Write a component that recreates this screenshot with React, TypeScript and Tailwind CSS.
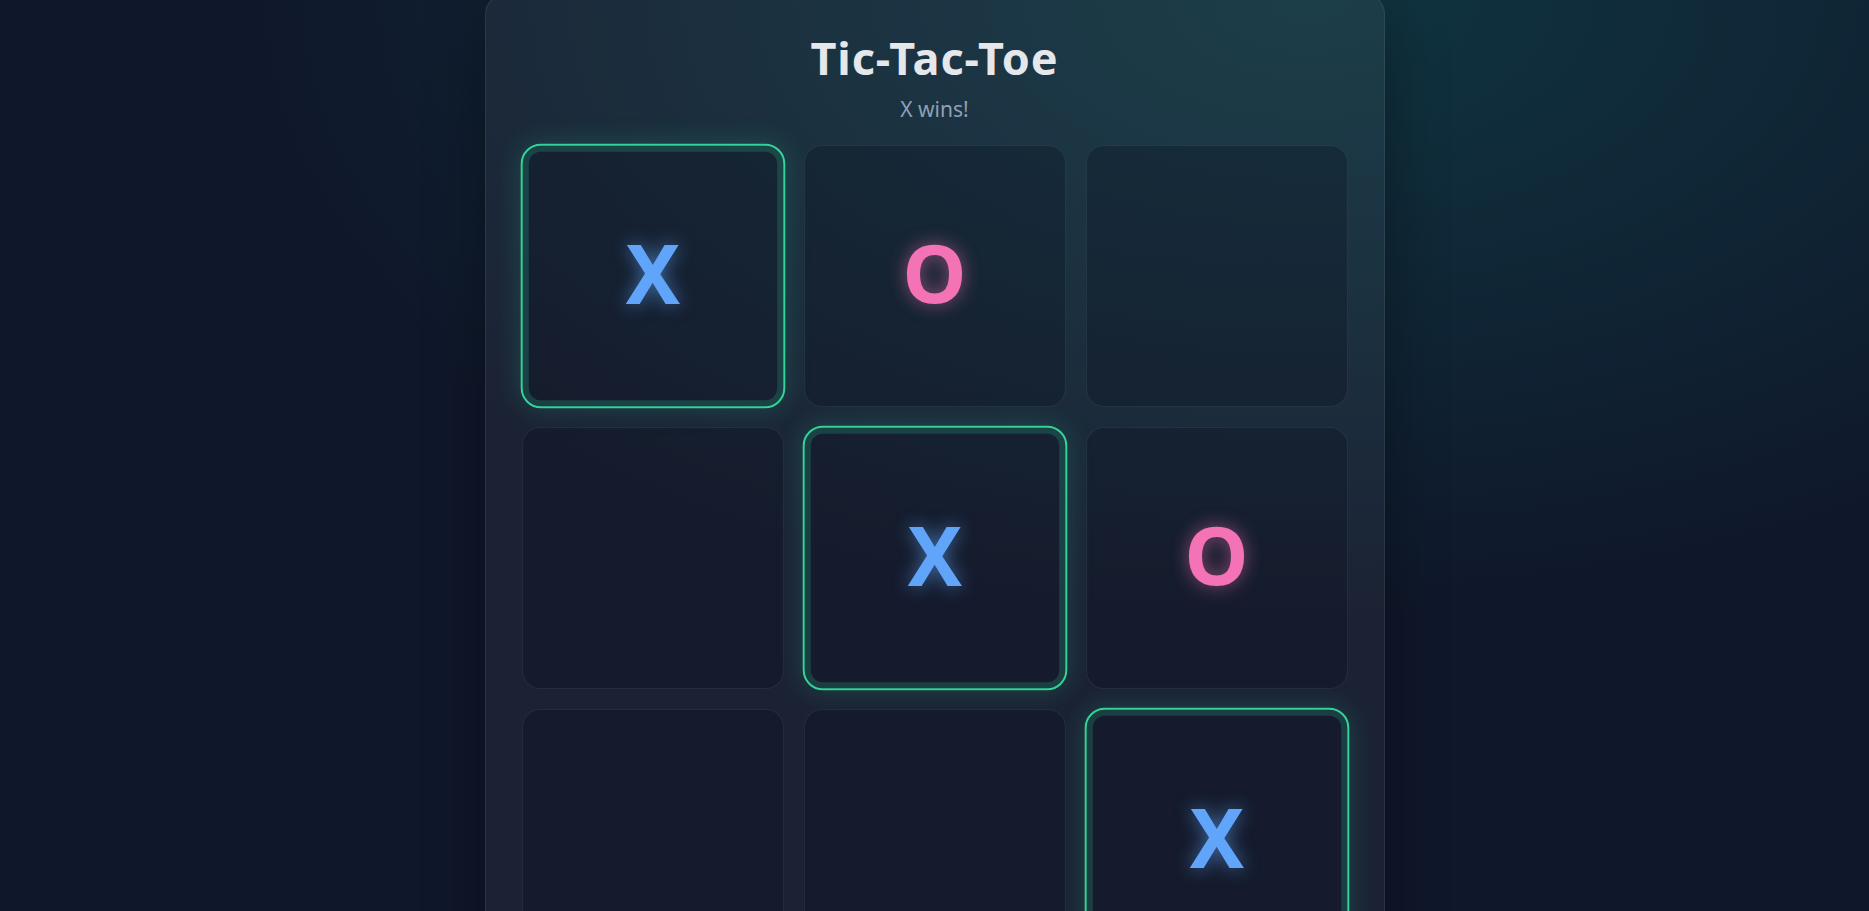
import { useState } from 'react'

type Mark = 'X' | 'O' | null

const lines = [
  [0, 1, 2], [3, 4, 5], [6, 7, 8],
  [0, 3, 6], [1, 4, 7], [2, 5, 8],
  [0, 4, 8], [2, 4, 6],
]

const findWinner = (board: Mark[]) => {
  for (const [a, b, c] of lines) {
    if (board[a] && board[a] === board[b] && board[a] === board[c]) {
      return { player: board[a], line: [a, b, c] }
    }
  }
  return null
}

const Cell = ({ value, highlight, onClick }: { value: Mark; highlight: boolean; onClick: () => void }) => (
  <button
    onClick={onClick}
    className={
      highlight
        ? 'aspect-square scale-[1.01] rounded-[20px] border-2 border-[#34d399] bg-[#020617]/25 shadow-[inset_0_0_0_6px_rgba(52,211,153,0.2),0_0_26px_rgba(52,211,153,0.2)] flex items-center justify-center'
        : 'aspect-square rounded-[18px] border border-white/[0.07] bg-[#020617]/25 flex items-center justify-center'
    }
  >
    {value === 'X' && (
      <span className="mb-2 text-[81px] leading-none font-bold text-[#60a5fa] [text-shadow:0_0_18px_rgba(96,165,250,0.6)]">X</span>
    )}
    {value === 'O' && (
      <span className="mb-2 text-[81px] leading-none font-bold text-[#f472b6] [text-shadow:0_0_18px_rgba(244,114,182,0.55)]">O</span>
    )}
  </button>
)

export default function App() {
  const [board, setBoard] = useState<Mark[]>(['X', 'O', null, null, 'X', 'O', null, null, 'X'])
  const winner = findWinner(board)

  const play = (i: number) => {
    if (board[i] || winner) return
    const xs = board.filter((m) => m === 'X').length
    const os = board.filter((m) => m === 'O').length
    const next = [...board]
    next[i] = xs > os ? 'O' : 'X'
    setBoard(next)
  }

  return (
    <div
      className="h-screen overflow-hidden bg-[#0f172a] bg-[radial-gradient(ellipse_1100px_620px_at_70%_0%,rgba(20,184,166,0.18),transparent)] flex justify-center"
      style={{ fontFamily: '"Noto Sans", "Open Sans", sans-serif' }}
    >
      <div className="w-[900px] -mt-[6px] self-start rounded-[20px] border border-white/[0.07] bg-white/[0.05] p-9 shadow-[0_20px_60px_rgba(0,0,0,0.35)]">
        <h1 className="text-center text-[45px] leading-[1.2] font-bold tracking-[0.02em] text-[#e5e7eb]">Tic-Tac-Toe</h1>
        <p className="mt-[9px] mb-[19px] text-center text-[21px] leading-[1.5] text-[#8ea0b8]">
          {winner ? `${winner.player} wins!` : 'Next turn'}
        </p>
        <div className="grid grid-cols-3 gap-5">
          {board.map((v, i) => (
            <Cell key={i} value={v} highlight={!!winner && winner.line.includes(i)} onClick={() => play(i)} />
          ))}
        </div>
      </div>
    </div>
  )
}
